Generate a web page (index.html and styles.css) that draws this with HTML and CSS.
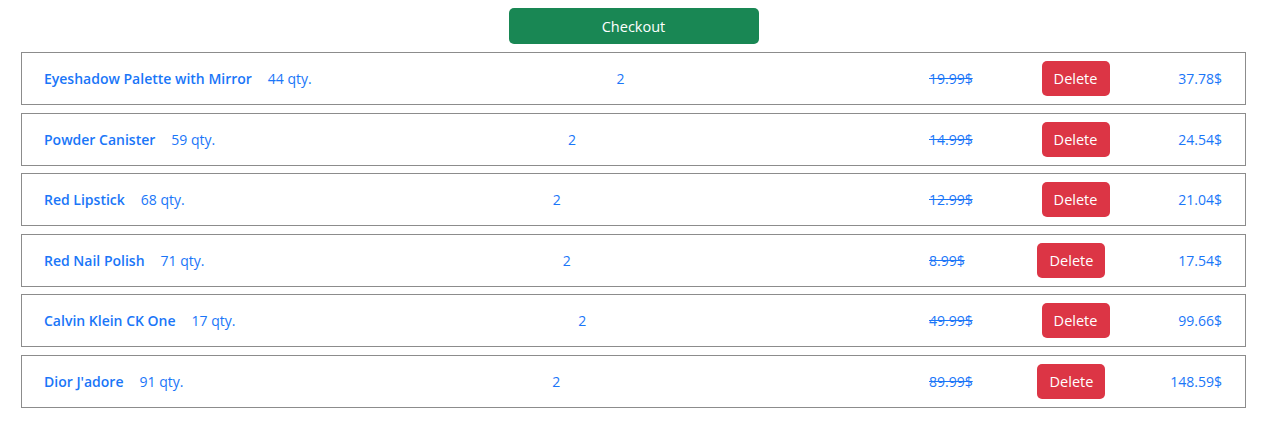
FILE: index.html
```html
<!DOCTYPE html>
<html lang="en">
<head>
<meta charset="utf-8">
<title>Cart</title>
<link rel="stylesheet" href="styles.css">
</head>
<body>
<div class="page">
  <div class="top">
    <button class="checkout">Checkout</button>
  </div>
  <div class="list">
    <div class="row">
      <div class="info"><span class="name">Eyeshadow Palette with Mirror</span><span class="stock">44 qty.</span></div>
      <span class="count">2</span>
      <div class="right"><span class="price">19.99$</span><button class="del">Delete</button><span class="total">37.78$</span></div>
    </div>
    <div class="row">
      <div class="info"><span class="name">Powder Canister</span><span class="stock">59 qty.</span></div>
      <span class="count">2</span>
      <div class="right"><span class="price">14.99$</span><button class="del">Delete</button><span class="total">24.54$</span></div>
    </div>
    <div class="row">
      <div class="info"><span class="name">Red Lipstick</span><span class="stock">68 qty.</span></div>
      <span class="count">2</span>
      <div class="right"><span class="price">12.99$</span><button class="del">Delete</button><span class="total">21.04$</span></div>
    </div>
    <div class="row">
      <div class="info"><span class="name">Red Nail Polish</span><span class="stock">71 qty.</span></div>
      <span class="count">2</span>
      <div class="right"><span class="price">8.99$</span><button class="del">Delete</button><span class="total">17.54$</span></div>
    </div>
    <div class="row">
      <div class="info"><span class="name">Calvin Klein CK One</span><span class="stock">17 qty.</span></div>
      <span class="count">2</span>
      <div class="right"><span class="price">49.99$</span><button class="del">Delete</button><span class="total">99.66$</span></div>
    </div>
    <div class="row">
      <div class="info"><span class="name">Dior J'adore</span><span class="stock">91 qty.</span></div>
      <span class="count">2</span>
      <div class="right"><span class="price">89.99$</span><button class="del">Delete</button><span class="total">148.59$</span></div>
    </div>
  </div>
</div>
</body>
</html>
```
FILE: styles.css
```css
* { box-sizing: border-box; }
body {
  margin: 0;
  background: #fff;
  font-family: "Open Sans", "Noto Sans", sans-serif;
  font-size: 14px;
  color: #1a76f8;
}
.page {
  padding: 8px 34px 0 21px;
}
.top {
  display: flex;
  justify-content: center;
  margin-bottom: 8px;
}
.checkout {
  width: 250px;
  height: 36px;
  border: none;
  border-radius: 5px;
  background: #198754;
  color: #fff;
  font-family: inherit;
  font-size: 14.5px;
}
.list {
  display: flex;
  flex-direction: column;
  gap: 7.5px;
}
.row {
  display: flex;
  align-items: center;
  justify-content: space-between;
  border: 1px solid #8c8c8c;
  padding: 8px 23px 8px 22px;
  height: 53px;
}
.info {
  display: flex;
  gap: 16px;
  align-items: baseline;
}
.name { font-weight: 600; }
.right {
  width: 293px;
  display: flex;
  align-items: center;
  justify-content: space-between;
}
.price { text-decoration: line-through; }
.del {
  width: 68px;
  height: 35px;
  padding: 0;
  border: none;
  border-radius: 5px;
  background: #dc3545;
  color: #fff;
  font-family: inherit;
  font-size: 14.5px;
}
```
